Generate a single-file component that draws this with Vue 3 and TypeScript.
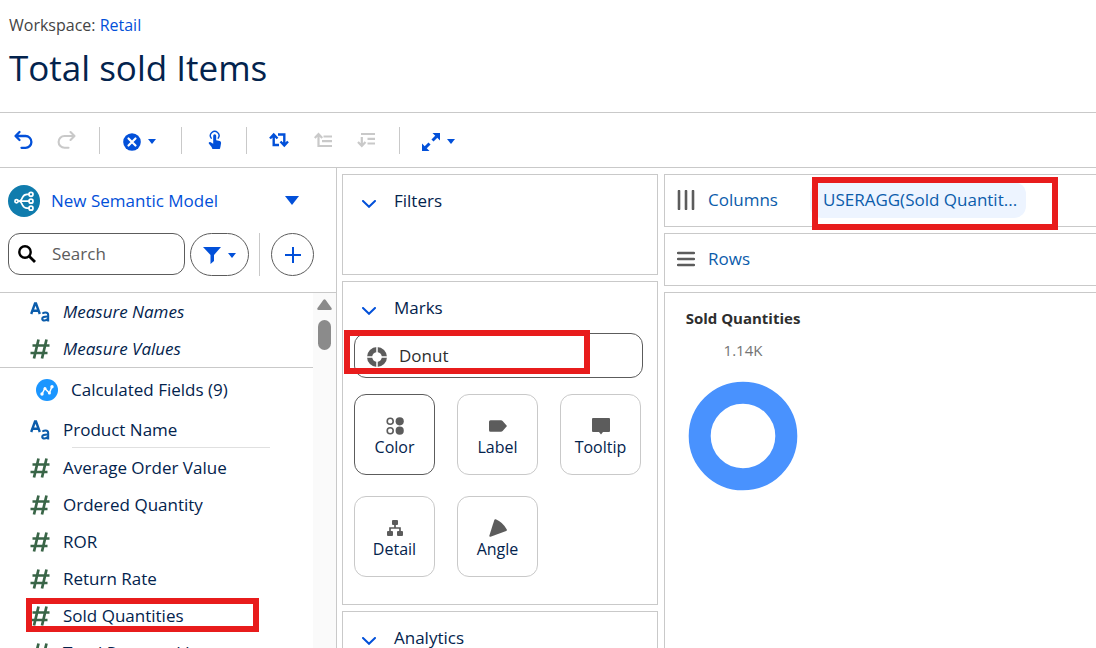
<script setup lang="ts">
import { ref } from 'vue'

type FieldKind = 'text' | 'number'
interface Field { name: string; kind: FieldKind; marked?: boolean }
interface MarkCard { name: string; icon: string; active?: boolean }

const search = ref('')
const markType = ref('Donut')

const generated: Field[] = [
  { name: 'Measure Names', kind: 'text' },
  { name: 'Measure Values', kind: 'number' },
]

const measures: Field[] = [
  { name: 'Average Order Value', kind: 'number' },
  { name: 'Ordered Quantity', kind: 'number' },
  { name: 'ROR', kind: 'number' },
  { name: 'Return Rate', kind: 'number' },
  { name: 'Sold Quantities', kind: 'number', marked: true },
  { name: 'Total Returned Items', kind: 'number' },
]

const cards: MarkCard[] = [
  { name: 'Color', icon: 'color', active: true },
  { name: 'Label', icon: 'label' },
  { name: 'Tooltip', icon: 'tooltip' },
  { name: 'Detail', icon: 'detail' },
  { name: 'Angle', icon: 'angle' },
]
</script>

<template>
  <div class="app">
    <header class="head">
      <p class="crumb">Workspace: <a href="#retail">Retail</a></p>
      <h1>Total sold Items</h1>
    </header>

    <div class="toolbar" role="toolbar" aria-label="Visualization tools">
      <div class="group first">
        <button class="tool" type="button" aria-label="Undo">
          <svg width="20" height="20" viewBox="0 0 20 20" fill="none" stroke="currentColor" stroke-width="2.300" stroke-linecap="round" stroke-linejoin="round"><path d="M6.500 2 2.500 6l4 4M3 6h9.500a5.500 5.500 0 0 1 0 11.800H8.500" /></svg>
        </button>
        <button class="tool off" type="button" aria-label="Redo" disabled>
          <svg width="20" height="20" viewBox="0 0 20 20" fill="none" stroke="currentColor" stroke-width="2.100" stroke-linecap="round" stroke-linejoin="round"><path d="m13.500 2 4 4-4 4M17 6H7.500a5.500 5.500 0 0 0 0 11.800H11.500" /></svg>
        </button>
      </div>
      <div class="group clear">
        <button class="tool menu" type="button" aria-label="Clear">
          <svg width="18" height="18" viewBox="0 0 18 18"><circle cx="9" cy="9" r="8.800" fill="currentColor" /><path d="m5.500 5.500 7 7m0-7-7 7" stroke="#fff" stroke-width="2.200" stroke-linecap="round" /></svg>
          <svg width="8" height="5" viewBox="0 0 8 5"><path d="M0 0h8L4 5z" fill="currentColor" /></svg>
        </button>
      </div>
      <div class="group touch">
        <button class="tool" type="button" aria-label="Interact">
          <svg width="14" height="20" viewBox="0 0 14 20"><path d="M3.200 8.200A4.300 4.300 0 1 1 10.200 8.200" fill="none" stroke="currentColor" stroke-width="1.400" stroke-linecap="round" /><path d="M5.200 5.700a1.500 1.500 0 0 1 3 0v4.600l3.600.8q1.400.4 1.300 1.800l-.6 3.600-.5 2q-.2.500-.8.500H5q-.6 0-.8-.5l-.6-1.500-2.800-3.600q-.3-.7.3-1.200 1.100-.7 2 .2l2.100 1.400z" fill="currentColor" /></svg>
        </button>
      </div>
      <div class="group sort">
        <button class="tool" type="button" aria-label="Swap rows and columns">
          <svg width="20" height="16" viewBox="0 0 20 16" fill="none" stroke="currentColor" stroke-width="2.400"><path d="M1 6.500 4.700 2.500 8.500 6.500M4.700 3.500v9.500H10M11.500 9.500l3.800 4 3.700-4M15.300 12.500V2.500H9" /></svg>
        </button>
        <button class="tool off" type="button" aria-label="Sort ascending" disabled>
          <svg width="18" height="16" viewBox="0 0 18 16" fill="none" stroke="currentColor" stroke-width="2.200"><path d="m.8 6 3.700-4 3.700 4M4.500 3v11H18M9.500 4.500H18M8 9.200h10" /></svg>
        </button>
        <button class="tool off" type="button" aria-label="Sort descending" disabled>
          <svg width="18" height="16" viewBox="0 0 18 16" fill="none" stroke="currentColor" stroke-width="2.200"><path d="M4 2h14M10.500 6.800H18M10.500 11.500H18M4.800 5v9M1 10l3.800 4 3.700-4" /></svg>
        </button>
      </div>
      <div class="group size">
        <button class="tool menu" type="button" aria-label="Fit">
          <svg width="18" height="18" viewBox="0 0 18 18"><path d="M10.500 0H18v7.500zM7.500 18H0v-7.500z" fill="currentColor" /><path d="m10.500 7.500 4-4M7.500 10.500l-4 4" stroke="currentColor" stroke-width="3" /></svg>
          <svg width="8" height="5" viewBox="0 0 8 5"><path d="M0 0h8L4 5z" fill="currentColor" /></svg>
        </button>
      </div>
    </div>

    <main class="body">
      <aside class="side">
        <button class="model" type="button">
          <svg class="model-icon" width="32" height="32" viewBox="0 0 32 32"><circle cx="16" cy="16" r="16" fill="#107cad" /><g fill="none" stroke="#fff" stroke-width="1.700"><circle cx="8.500" cy="16.200" r="1.600" /><circle cx="23" cy="9.300" r="2" /><circle cx="23" cy="16.200" r="2" /><circle cx="23" cy="23.200" r="2" /><path d="M10 16.200h11M21 9.300h-2q-3 0-4.500 3l-1 2q-.8 1.900-3 1.900 2.200 0 3 1.900l1 2q1.500 3 4.500 3h2" /></g></svg>
          <span class="model-name">New Semantic Model</span>
          <svg width="14" height="9" viewBox="0 0 14 9"><path d="M0 0h14L7 9z" fill="currentColor" /></svg>
        </button>

        <div class="finder">
          <label class="search">
            <svg width="18" height="18" viewBox="0 0 18 18" fill="none" stroke="#000"><circle cx="7" cy="7" r="5.700" stroke-width="2.400" /><path d="m11.200 11.200 5.800 5.800" stroke-width="2.800" /></svg>
            <input v-model="search" type="text" placeholder="Search" aria-label="Search fields" />
          </label>
          <button class="pill filter" type="button" aria-label="Filter fields">
            <svg width="18" height="17" viewBox="0 0 18 17"><path d="M0 0h18l-7 8v6l-3.500 3V8z" fill="currentColor" /></svg>
            <svg width="8" height="5" viewBox="0 0 8 5"><path d="M0 0h8L4 5z" fill="currentColor" /></svg>
          </button>
          <span class="rule"></span>
          <button class="pill add" type="button" aria-label="Add field">
            <svg width="16" height="16" viewBox="0 0 16 16"><path d="M8 0v16M0 8h16" stroke="currentColor" stroke-width="2" /></svg>
          </button>
        </div>

        <div class="fields">
          <div class="list">
            <ul class="generated">
              <li v-for="f in generated" :key="f.name" class="field">
                <svg v-if="f.kind === 'text'" width="20" height="20" viewBox="0 0 20 20"><path d="M1.200 12 5 1.500h1L9.800 12M2.500 8.700h6" fill="none" stroke="#0b5cab" stroke-width="2.400" /><path d="M12.300 11.500q1.600-1 3.400-1 2.500 0 2.500 2.500V19.500M18 14.500q-5.800-.2-5.800 2.300 0 1.800 2.200 1.800 2.500 0 3.600-2" fill="none" stroke="#0b5cab" stroke-width="2" /></svg>
                <svg v-else width="20" height="20" viewBox="0 0 20 20"><path d="M8.500.500 4 19.500M16.500.500 12 19.500M2.500 6.500H19.500M.5 14H17.500" fill="none" stroke="#396547" stroke-width="2.700" /></svg>
                <em>{{ f.name }}</em>
              </li>
            </ul>
            <ul>
              <li class="field folder">
                <svg width="22" height="22" viewBox="0 0 22 22"><circle cx="11" cy="11" r="11" fill="#1b96ff" /><path d="m6 15 2.800-5.500 4.600 4.500L16 7.500" fill="none" stroke="#fff" stroke-width="1.500" /><g fill="#fff"><circle cx="6" cy="15" r="1.700" /><circle cx="9" cy="9.500" r="1.500" /><circle cx="13.400" cy="14" r="1.500" /><circle cx="16" cy="7.700" r="1.700" /></g></svg>
                <span>Calculated Fields (9)</span>
              </li>
              <li class="field dimension">
                <svg width="20" height="20" viewBox="0 0 20 20"><path d="M1.200 12 5 1.500h1L9.800 12M2.500 8.700h6" fill="none" stroke="#0b5cab" stroke-width="2.400" /><path d="M12.300 11.500q1.600-1 3.400-1 2.500 0 2.500 2.500V19.500M18 14.500q-5.800-.2-5.800 2.300 0 1.800 2.200 1.800 2.500 0 3.600-2" fill="none" stroke="#0b5cab" stroke-width="2" /></svg>
                <span>Product Name</span>
              </li>
            </ul>
            <hr />
            <ul>
              <li v-for="f in measures" :key="f.name" class="field">
                <svg width="20" height="20" viewBox="0 0 20 20"><path d="M8.500.500 4 19.500M16.500.500 12 19.500M2.500 6.500H19.500M.5 14H17.500" fill="none" stroke="#396547" stroke-width="2.700" /></svg>
                <span>{{ f.name }}</span>
                <i v-if="f.marked" class="callout on-field"></i>
              </li>
            </ul>
          </div>
          <div class="scrollbar">
            <svg width="15" height="11" viewBox="0 0 15 11"><path d="M6.500.800q1-1.300 2 0l6 8.200q.8 2-1 2h-12q-1.800 0-1-2z" fill="#8b8b8b" /></svg>
            <span class="thumb"></span>
          </div>
        </div>
      </aside>

      <section class="shelves">
        <div class="panel filters">
          <h2 class="panel-head"><svg width="14" height="8" viewBox="0 0 14 8"><path d="m1 1 6 5.800L13 1" fill="none" stroke="#0250d9" stroke-width="2" stroke-linecap="round" /></svg>Filters</h2>
        </div>
        <div class="panel marks">
          <h2 class="panel-head"><svg width="14" height="8" viewBox="0 0 14 8"><path d="m1 1 6 5.800L13 1" fill="none" stroke="#0250d9" stroke-width="2" stroke-linecap="round" /></svg>Marks</h2>
          <div class="mark-type">
            <svg width="20" height="20" viewBox="0 0 20 20"><circle cx="10" cy="10" r="7.400" fill="none" stroke="#5c5c5c" stroke-width="5.200" /><path d="M10 0v20M0 10h20" stroke="#fff" stroke-width="1.500" /></svg>
            <select v-model="markType" aria-label="Mark type">
              <option>Donut</option>
            </select>
            <i class="callout on-type"></i>
          </div>
          <div class="cards">
            <button v-for="c in cards" :key="c.name" type="button" class="card" :class="{ active: c.active }">
              <svg width="18" height="18" viewBox="0 0 18 18" fill="#5c5c5c">
                <g v-if="c.icon === 'color'"><circle cx="4.200" cy="4.300" r="3" fill="none" stroke="#5c5c5c" stroke-width="1.600" /><circle cx="4.200" cy="13.700" r="3" fill="none" stroke="#5c5c5c" stroke-width="1.600" /><circle cx="13.700" cy="4.300" r="4.100" /><circle cx="13.700" cy="13.700" r="4.100" /></g>
                <path v-else-if="c.icon === 'label'" d="M1.500 3.200H12q1 0 1.600.7L18 9l-4.400 5.100q-.6.700-1.600.7H1.500Q0 14.800 0 13.300V4.700q0-1.500 1.500-1.500z" />
                <path v-else-if="c.icon === 'tooltip'" d="M1 1h16q1 0 1 1v12q0 1-1 1h-6l-2 2.500L7 15H1q-1 0-1-1V2q0-1 1-1z" />
                <g v-else-if="c.icon === 'detail'"><rect x="6" y="1" width="6" height="5" rx="1" /><rect x="1" y="12" width="6" height="5" rx="1" /><rect x="11" y="12" width="6" height="5" rx="1" /><path d="M9 5v4M4 13V9h10v4" fill="none" stroke="#5c5c5c" stroke-width="1.700" /></g>
                <path v-else d="M5.300.900Q5.700 0 6.800.300 13.500 3 17.800 10.500q.4.900-.6 1.400L1.500 17.700Q0 18 .4 16.500z" />
              </svg>
              <span>{{ c.name }}</span>
            </button>
          </div>
        </div>
        <div class="panel analytics">
          <h2 class="panel-head"><svg width="14" height="8" viewBox="0 0 14 8"><path d="m1 1 6 5.800L13 1" fill="none" stroke="#0250d9" stroke-width="2" stroke-linecap="round" /></svg>Analytics</h2>
        </div>
      </section>

      <section class="canvas">
        <div class="shelf">
          <svg width="18" height="20" viewBox="0 0 18 20"><path d="M2 1v18M9 1v18M16 1v18" stroke="#5c5c5c" stroke-width="2.600" stroke-linecap="round" /></svg>
          <h2>Columns</h2>
          <div class="slot">
            <button class="token" type="button">USERAGG(Sold Quantit...</button>
            <i class="callout on-token"></i>
          </div>
        </div>
        <div class="shelf">
          <svg width="18" height="16" viewBox="0 0 18 16"><path d="M1 2h16M1 8h16M1 14h16" stroke="#5c5c5c" stroke-width="2.400" stroke-linecap="round" /></svg>
          <h2>Rows</h2>
        </div>
        <div class="viz">
          <figure>
            <figcaption>Sold Quantities</figcaption>
            <span class="value">1.14K</span>
            <svg width="110" height="110" viewBox="0 0 110 110"><circle cx="55" cy="55" r="43.300" fill="none" stroke="#4992fe" stroke-width="22" /></svg>
          </figure>
        </div>
      </section>
    </main>
  </div>
</template>

<style>
body { margin: 0; }
</style>

<style scoped>
* { box-sizing: border-box; }
.app {
  display: flex;
  flex-direction: column;
  height: 100vh;
  overflow: hidden;
  background: #fff;
  color: #03234d;
  font-family: "Segoe UI", "Open Sans", "Noto Sans", sans-serif;
  font-size: 17px;
  line-height: 24px;
}
button, input, select { font: inherit; color: inherit; background: none; border: 0; padding: 0; margin: 0; }
h1, h2, p, ul, figure { margin: 0; padding: 0; font-weight: 400; }
h2 { font-size: 17px; }
ul { list-style: none; }
svg { display: block; flex: none; }

.head { flex: none; padding: 13px 9px 18px; border-bottom: 1px solid #c9c9c9; }
.crumb { color: #444; font-size: 16px; }
.crumb a { color: #0250d9; text-decoration: none; }
h1 { margin-top: 5px; font-size: 35px; line-height: 52px; }

.toolbar { flex: none; display: flex; align-items: center; height: 55px; border-bottom: 1px solid #c9c9c9; color: #0250d9; }
.group { display: flex; align-items: center; height: 27px; border-left: 1px solid #c9c9c9; }
.group.first { width: 99px; padding-left: 13px; gap: 24px; border-left: 0; }
.group.clear { width: 82px; padding-left: 23px; }
.group.touch { width: 65px; padding-left: 26px; }
.group.sort { width: 153px; padding-left: 22px; gap: 25px; }
.group.size { padding-left: 22px; }
.tool { display: flex; align-items: center; }
.tool.menu { gap: 7px; padding-top: 3px; }
.tool.off { color: #c9c9c9; }

.body { flex: 1; min-height: 0; display: flex; }
.side { flex: none; width: 337px; display: flex; flex-direction: column; border-right: 1px solid #c9c9c9; }
.model { flex: none; display: flex; align-items: center; height: 65px; padding: 0 37px 0 8px; color: #0250d9; text-align: left; }
.model-name { flex: 1; margin-left: 11px; }
.finder { flex: none; display: flex; align-items: center; height: 60px; padding: 0 22px 17px 8px; border-bottom: 1px solid #c9c9c9; }
.search { flex: 1; min-width: 0; display: flex; align-items: center; gap: 16px; height: 42px; padding: 0 9px; border: 1px solid #5c5c5c; border-radius: 12px; }
.search input { flex: 1; min-width: 0; outline: 0; }
.search input::placeholder { color: #5c5c5c; opacity: 1; }
.pill { display: flex; align-items: center; justify-content: center; height: 43px; padding-top: 2px; border: 1px solid #5c5c5c; border-radius: 22px; color: #0250d9; }
.filter { width: 59px; margin-left: 5px; gap: 7px; }
.rule { width: 1px; height: 43px; margin: 0 11px 0 10px; background: #c9c9c9; }
.add { width: 43px; }

.fields { flex: 1; min-height: 0; display: flex; }
.list { flex: 1; overflow: hidden; }
.generated { border-bottom: 1px solid #c9c9c9; }
.field { position: relative; display: flex; align-items: center; gap: 13px; height: 37px; padding-left: 30px; white-space: nowrap; }
.folder { height: 44px; padding-left: 36px; }
.dimension { height: 35px; }
hr { height: 1px; margin: 0 43px 1px 72px; border: 0; background: #e0e0e0; }
.scrollbar { flex: none; width: 23px; padding-top: 6px; display: flex; flex-direction: column; align-items: center; gap: 10px; background: #fafafa; }
.thumb { width: 13px; height: 30px; border-radius: 7px; background: #8b8b8b; }

.callout { position: absolute; border: 6px solid #e81c1c; pointer-events: none; }
.on-field { left: 26px; top: 1px; width: 233px; height: 34px; }
.on-type { left: -11px; top: -4px; width: 246px; height: 44px; }
.on-token { left: 2px; top: -5px; width: 246px; height: 53px; }

.shelves { flex: none; width: 327px; padding: 6px 6px 0 5px; display: flex; flex-direction: column; gap: 6px; }
.panel { flex: none; border: 1px solid #c9c9c9; padding: 0 14px 0 11px; }
.filters { min-height: 101px; }
.panel-head { display: flex; align-items: center; gap: 18px; height: 51px; padding-left: 8px; }
.panel-head svg { margin-top: 6px; }
.marks { padding-bottom: 27px; }
.analytics { flex: 1; border-bottom: 0; }
.mark-type { position: relative; display: flex; align-items: center; height: 45px; padding-left: 12px; border: 1px solid #5c5c5c; border-radius: 12px; color: #2e2e2e; }
.mark-type svg { margin-top: 3px; }
.mark-type select { flex: 1; height: 42px; margin-left: 12px; appearance: none; outline: 0; }
.cards { display: grid; grid-template-columns: repeat(3, 81px); gap: 21px 22px; margin-top: 16px; }
.card { display: flex; flex-direction: column; align-items: center; justify-content: center; height: 81px; padding-top: 7px; border: 1px solid #c9c9c9; border-radius: 12px; font-size: 16px; line-height: 24px; }
.card.active { border-color: #5c5c5c; }

.canvas { flex: 1; min-width: 0; padding-top: 6px; display: flex; flex-direction: column; gap: 6px; }
.shelf { flex: none; display: flex; align-items: center; height: 53px; padding: 0 0 2px 12px; border: 1px solid #c9c9c9; border-right: 0; color: #0b5cab; }
.shelf h2 { width: 88px; margin-left: 13px; }
.slot { position: relative; margin-left: 14px; }
.token { display: block; width: 216px; height: 36px; padding-left: 13px; border-radius: 12px; background: #edf4ff; text-align: left; white-space: nowrap; }
.viz { flex: 1; padding: 13px 19px; border: 1px solid #c9c9c9; border-right: 0; border-bottom: 0; }
figure { width: 118px; display: flex; flex-direction: column; align-items: center; white-space: nowrap; }
figcaption { color: #2e2e2e; font-size: 15px; font-weight: 700; }
.value { margin: 8px 0 19px; color: #747474; font-size: 15px; }
</style>
